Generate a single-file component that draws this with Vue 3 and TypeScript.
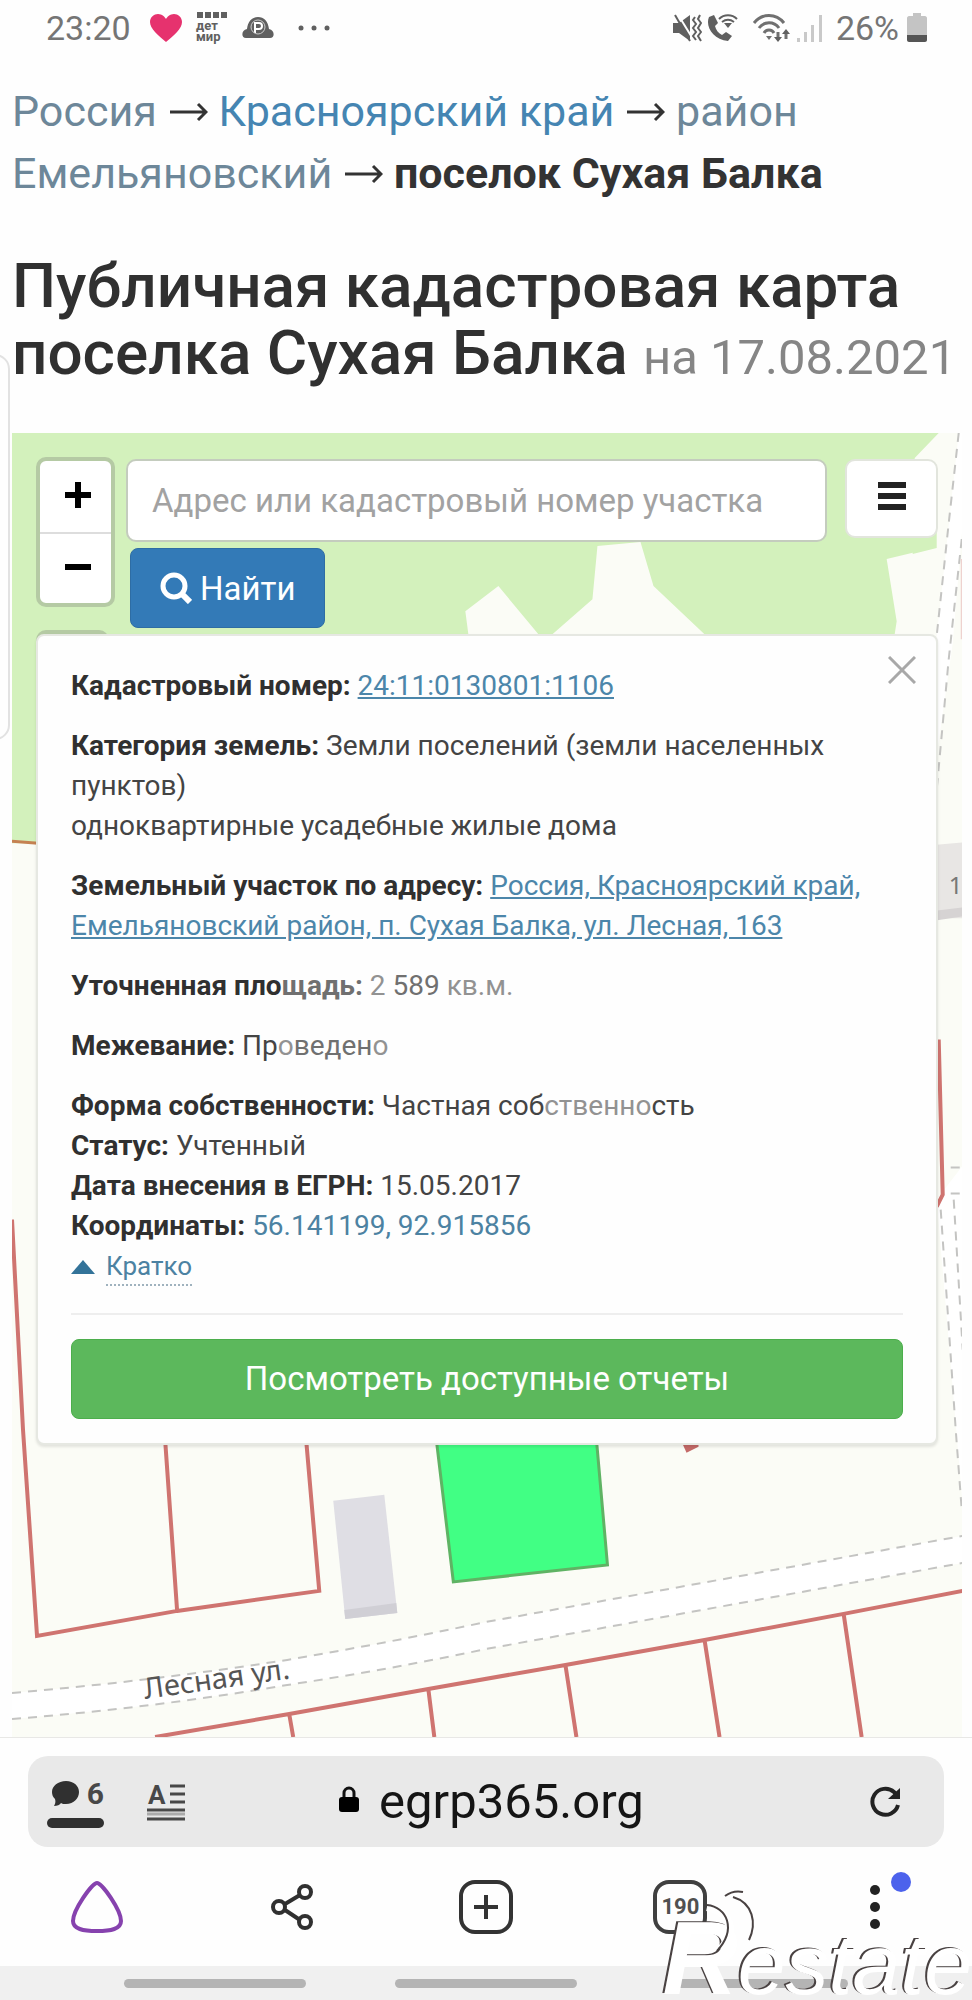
<script setup lang="ts">
import { ref } from 'vue'

interface Crumb {
  label: string
  tone: 'muted' | 'link'
}

const crumbs: Crumb[] = [
  { label: 'Россия', tone: 'muted' },
  { label: 'Красноярский край', tone: 'link' },
  { label: 'район Емельяновский', tone: 'muted' },
]

const query = ref('')
</script>

<template>
  <div class="page">
    <div class="statusbar">
      <div class="status-group">
        <span>23:20</span>
        <svg class="heart" viewBox="0 0 34 30" width="34" height="30">
          <path d="M17 29C9 22 1 16 1 9c0-5 4-8 8-8 4 0 7 3 8 5 1-2 4-5 8-5s8 3 8 8c0 7-8 13-16 20z" fill="#e6326e" />
        </svg>
        <svg class="mini-app" viewBox="0 0 34 34" width="34" height="34" fill="#606060">
          <path d="M2 1h6v6H2zM10 1h6v6h-6zM18 1h6v6h-6zM26 1h6v6h-6z" />
          <text x="1" y="19" class="mini-text">дет</text>
          <text x="1" y="30" class="mini-text">мир</text>
        </svg>
        <svg viewBox="0 0 34 24" width="34" height="24">
          <path d="M5 22c-5 0-5-8 1-9C7 5 11 1 17 1s10 4 11 12c6 1 6 9 1 9z" fill="#606060" />
          <path d="M14 17V7h4a3 3 0 0 1 0 6h-4" fill="none" stroke="#fff" stroke-width="2" />
          <circle cx="17" cy="11" r="7" fill="none" stroke="#ccc" stroke-width="1" />
        </svg>
        <svg class="more" viewBox="0 0 34 6" width="34" height="6" fill="#606060">
          <circle cx="4" cy="3" r="2.500" /><circle cx="17" cy="3" r="2.500" /><circle cx="30" cy="3" r="2.500" />
        </svg>
      </div>
      <div class="status-group right">
        <svg viewBox="0 0 30 30" width="30" height="30" fill="none" stroke="#606060">
          <path d="M1 10h6l11-8v26L7 20H1z" fill="#606060" stroke="none" />
          <path d="M5 0l16 26" stroke="#fff" stroke-width="2" />
          <path d="M3 2l15 26" stroke-width="2" />
          <path d="M23 4l-2 3 3 4-3 4 3 4-3 4 3 4M28 2l-2 4 3 4-3 5 3 4-3 4 3 5" stroke-width="2" />
        </svg>
        <svg viewBox="0 0 32 30" width="32" height="30" fill="none" stroke="#606060">
          <path d="M3 4c-4 9 4 23 19 24l4-5-6-4-4 3c-4-2-6-5-7-9l3-3-4-8z" fill="#606060" stroke="none" />
          <path d="M13 6c5-5 13-5 18 0M16 9c4-3 8-3 12 0" stroke-width="2" />
          <path d="M18 10h8l-4 5z" fill="#606060" stroke="none" />
        </svg>
        <svg class="wifi" viewBox="0 0 40 30" width="40" height="30" fill="none" stroke="#707070" stroke-width="3">
          <path d="M2 10c8-10 22-10 30 0M7 15c5-7 15-7 20 0M12 20c2-4 8-4 10 0" />
          <path d="M14 23h6l-3 4z" fill="#707070" stroke="none" />
          <path d="M26 19v7M34 26v-6" />
          <path d="M22 24h8l-4 5zM30 21h8l-4-5z" fill="#606060" stroke="none" />
        </svg>
        <svg viewBox="0 0 28 30" width="28" height="30" fill="#c9c9c9">
          <path d="M1 25h3v4H1zM8 19h3v10H8zM15 12h3v17h-3zM23 2h3v27h-3z" />
        </svg>
        <span class="percent">26%</span>
        <svg viewBox="0 0 20 30" width="20" height="30">
          <path d="M6 0h8v3h4c1 0 2 1 2 2v18H0V5c0-1 1-2 2-2h4z" fill="#c4c4c4" />
          <path d="M0 22h20v5c0 1-1 2-2 2H2c-1 0-2-1-2-2z" fill="#555" />
        </svg>
      </div>
    </div>

    <div class="drawer-edge"></div>

    <header class="head">
      <nav class="crumbs" aria-label="Регион">
        <template v-for="crumb in crumbs" :key="crumb.label">
          <a href="#" :class="crumb.tone">{{ crumb.label }}</a>
          <svg class="arrow" viewBox="0 0 38 20" width="38" height="20" fill="none" stroke="#333" stroke-width="3">
            <path d="M0 10h36M28 2l8 8-8 8" />
          </svg>
          {{ ' ' }}
        </template>
        <b>поселок Сухая Балка</b>
      </nav>
      <h1>Публичная кадастровая карта поселка Сухая Балка <small>на 17.08.2021</small></h1>
    </header>

    <main class="map">
      <svg class="canvas" viewBox="12 434 950 1303" preserveAspectRatio="xMinYMin slice" aria-hidden="true">
        <path d="M12 434h950v1303H12z" fill="#fbfcf6" />
        <path d="M12 434h926l-24 25v92l22-3-50 12 10 62-2 13H704l-51-48-13-44-43 4-5 53-40 35h-14l-40-48-33 25 3 23v209H12z" fill="#d3f1bc" />
        <path d="M912 462l24 34v53l-24 6z" fill="#d3f1bc" />
        <path d="M12 842l26 2" stroke="#c58252" stroke-width="3" />
        <path d="M958 434l-26 240v110l20-140 10-120v-90z" fill="#fff" />
        <path d="M958 434l-10 90-16 150M961 540l-13 120-12 130" class="dash" />
        <path d="M961 560v80" stroke="#eed2cf" stroke-width="2" />
        <path d="M930 846l32-3v76h-32z" fill="#e8e6e4" />
        <path d="M930 912l32-4v9l-32 5z" fill="#d6d3d3" />
        <text x="948" y="895" class="house">1</text>
        <path d="M936 1200l26-34v340z" fill="#fff" />
        <path d="M940 1210l15 220 6 80M950 1168h12M950 1194h12M953 1200l9 150" class="dash" />
        <g class="parcel">
          <path d="M938 1040l4 155-6 12" />
          <path d="M12 1220l11 210 14 206 140-25 142-20-13-150M165 1440l12 171" />
          <path d="M155 1737l134-23 139-25 137-24 139-25 139-26 119-23M289 1714l4 23M428 1689l6 48M565 1665l11 72M704 1640l15 97M843 1614l18 123" />
        </g>
        <path d="M682 1444l4 9 12-6v-3z" fill="#c46a68" />
        <path d="M333 1501l51-6 13 118-52 6z" fill="#dfdee4" />
        <path d="M344 1610l52-7 1 10-52 6z" fill="#d0cfd5" />
        <path d="M436 1440h160l11 125-154 17z" fill="#41ff84" stroke="#5fb364" stroke-width="3" />
        <path d="M12 1693q140-12 275-33 100-17 199-38l476-86v27l-476 86q-100 21-199 36-135 23-275 34z" fill="#fff" />
        <path d="M12 1693q140-12 275-33 100-17 199-38l476-86M12 1719q140-11 275-34 100-15 199-36l476-86" class="dash" />
        <text transform="translate(145 1699) rotate(-8)" class="street">Лесная ул.</text>
      </svg>

      <div class="controls">
        <div class="zoom-column">
          <div class="zoom">
            <button type="button" aria-label="Приблизить">
              <svg viewBox="0 0 26 26" width="26" height="26"><path d="M0 13h26M13 0v26" stroke="#000" stroke-width="6" /></svg>
            </button>
            <button type="button" aria-label="Отдалить">
              <svg viewBox="0 0 26 26" width="26" height="26"><path d="M0 13h26" stroke="#000" stroke-width="6" /></svg>
            </button>
          </div>
          <div class="under-control"></div>
        </div>
        <form class="search" @submit.prevent>
          <input v-model="query" type="text" aria-label="Адрес или кадастровый номер участка" placeholder="Адрес или кадастровый номер участка" />
          <button type="submit" class="find">
            <svg viewBox="0 0 32 32" width="32" height="32" fill="none" stroke="#fff">
              <circle cx="14" cy="14" r="11" stroke-width="5" /><path d="M21 21l9 9" stroke-width="6" />
            </svg>
            Найти
          </button>
        </form>
        <button type="button" class="layers" aria-label="Меню">
          <svg viewBox="0 0 28 30" width="28" height="30"><path d="M0 4h28M0 15h28M0 26h28" stroke="#222" stroke-width="6" /></svg>
        </button>
      </div>

      <section class="card">
        <button type="button" class="close" aria-label="Закрыть">
          <svg viewBox="0 0 28 28" width="28" height="28"><path d="M1 1l26 26M27 1L1 27" stroke="#a8a8a8" stroke-width="3" /></svg>
        </button>
        <p><b>Кадастровый номер:</b> <a href="#">24:11:0130801:1106</a></p>
        <p><b>Категория земель:</b> Земли поселений (земли населенных пунктов)<br />одноквартирные усадебные жилые дома</p>
        <p><b>Земельный участок по адресу:</b> <a href="#">Россия, Красноярский край, Емельяновский район, п. Сухая Балка, ул. Лесная, 163</a></p>
        <p><b>Уточненная пло<span class="soft">щадь:</span></b> <span class="pale">2 </span><span class="soft">589</span><span class="pale"> кв.м.</span></p>
        <p><b>Межевание:</b> Пр<span class="pale">о</span><span class="soft">веден</span><span class="pale">о</span></p>
        <p>
          <b>Форма собственности:</b> Частная соб<span class="pale">ственно</span>сть<br />
          <b>Статус:</b> Учтенный<br />
          <b>Дата внесения в ЕГРН:</b> 15.05.2017<br />
          <b>Координаты:</b> <span class="coords">56.141199, 92.915856</span>
        </p>
        <button type="button" class="brief">
          <svg viewBox="0 0 24 14" width="24" height="14"><path d="M0 14L12 0l12 14z" fill="#337399" /></svg>
          <span>Кратко</span>
        </button>
        <hr />
        <button type="button" class="reports">Посмотреть доступные отчеты</button>
      </section>
    </main>

    <footer class="browser">
      <div class="address">
        <button type="button" class="reviews" aria-label="Отзывы: 6">
          <span class="reviews-row">
            <svg viewBox="0 0 28 28" width="28" height="28"><path d="M14 1c8 0 13 5 13 11s-5 12-13 12c-2 0-4 0-5-1-1 2-4 3-7 3 1-2 2-4 1-7-2-2-3-4-3-7C0 6 6 1 14 1z" fill="#303030" /></svg>
            6
          </span>
        </button>
        <button type="button" class="reader" aria-label="Режим чтения">
          <svg viewBox="0 0 38 38" width="38" height="38" fill="none" stroke="#484848">
            <path d="M23 3h15M23 11h15M23 19h15M0 27h38M0 36h38" stroke-width="3" />
            <path d="M0 31h38" stroke="#aaa" stroke-width="3" />
            <text x="1" y="21" class="reader-a">A</text>
          </svg>
        </button>
        <div class="host">
          <svg viewBox="0 0 20 26" width="20" height="26"><path d="M5 12V7a5 5 0 0 1 10 0v5" fill="none" stroke="#111" stroke-width="3" /><rect y="11" width="20" height="15" rx="3" fill="#000" /></svg>
          <span>egrp365.org</span>
        </div>
        <button type="button" class="reload" aria-label="Обновить">
          <svg viewBox="0 0 32 32" width="32" height="32" fill="none" stroke="#222" stroke-width="4">
            <path d="M28 19A13 13 0 1 1 24 6l4 4" /><path d="M30 2v11H18z" fill="#222" stroke="none" />
          </svg>
        </button>
      </div>
      <nav class="tabs" aria-label="Панель браузера">
        <button type="button" aria-label="Алиса">
          <svg viewBox="0 0 54 54" width="54" height="54" fill="none" stroke="#8642ae" stroke-width="4">
            <path d="M27 3c5 0 24 27 24 38 0 8-10 10-24 10S3 49 3 41C3 30 22 3 27 3z" />
          </svg>
        </button>
        <button type="button" aria-label="Поделиться">
          <svg viewBox="0 0 44 48" width="44" height="48" fill="none" stroke="#303030" stroke-width="4">
            <path d="M15 21l15-9M15 27l15 10" /><circle cx="9" cy="24" r="6" /><circle cx="35" cy="9" r="6" /><circle cx="35" cy="39" r="6" />
          </svg>
        </button>
        <button type="button" aria-label="Новая вкладка">
          <svg viewBox="0 0 56 56" width="56" height="56" fill="none" stroke="#333" stroke-width="4">
            <rect x="3" y="3" width="50" height="50" rx="14" /><path d="M28 16v24M16 28h24" />
          </svg>
        </button>
        <button type="button" class="count" aria-label="Вкладки: 190"><span>190</span></button>
        <button type="button" class="menu" aria-label="Меню браузера">
          <svg viewBox="0 0 10 44" width="10" height="44" fill="#222"><circle cx="5" cy="5" r="5" /><circle cx="5" cy="22" r="5" /><circle cx="5" cy="39" r="5" /></svg>
          <i></i>
        </button>
      </nav>
      <div class="system"><i></i><i></i><i></i></div>
      <div class="watermark">
        <svg class="swirl" viewBox="0 0 56 66" width="56" height="66" fill="none">
          <path d="M2 18Q30 24 24 50l-8 10" stroke="#fff" stroke-width="8" />
          <path d="M2 16c20 2 30 24 10 46" stroke="#494242" stroke-width="2" />
          <path d="M20 7q8-6 18-4" stroke="#494242" stroke-width="2" />
          <path d="M28 8c20 6 24 26 16 43" stroke="#494242" stroke-width="2" />
        </svg>
        <span class="big">R</span><span>estate</span>
      </div>
    </footer>
  </div>
</template>

<style>
body {
  margin: 0;
  background: #fefefe;
}
</style>

<style scoped>
.page {
  position: relative;
  display: flex;
  flex-direction: column;
  min-height: 100vh;
  overflow: hidden;
  background: #fefefe;
  color: #333;
  font-family: Roboto, "Liberation Sans", sans-serif;
}
.page * {
  box-sizing: border-box;
}
button {
  padding: 0;
  border: 0;
  background: none;
  color: inherit;
  font: inherit;
}
svg {
  display: block;
  flex: none;
}
.statusbar {
  display: flex;
  justify-content: space-between;
  height: 56px;
  padding: 0 45px 0 46px;
  color: #757575;
  font-size: 34px;
  line-height: 58px;
}
.status-group {
  display: flex;
  align-items: center;
  gap: 12px;
}
.status-group .heart {
  margin-left: 6px;
}
.status-group .more {
  margin-left: 10px;
}
.mini-text {
  font: 700 13px Roboto, sans-serif;
}
.right {
  gap: 4px;
}
.right .wifi {
  margin-left: 10px;
}
.percent {
  margin: 0 4px 0 8px;
}
.drawer-edge {
  position: absolute;
  top: 354px;
  left: -20px;
  width: 30px;
  height: 386px;
  border: 2px solid #e2e2e2;
  border-radius: 16px;
}
.head {
  padding: 24px 12px 47px;
}
.crumbs {
  font-size: 43px;
  line-height: 62px;
}
.crumbs a {
  text-decoration: none;
}
.muted {
  color: #6d8799;
}
.link {
  color: #4585b2;
}
.arrow {
  display: inline-block;
  margin-left: 13px;
  vertical-align: 4px;
}
h1 {
  margin: 48px 0 0;
  color: #303030;
  font-size: 62px;
  font-weight: 500;
  line-height: 67px;
}
h1 small {
  color: #858585;
  font-size: 49px;
  font-weight: 400;
  line-height: 50px;
}
.map {
  position: relative;
  flex: 1;
  margin: 0 10px 0 12px;
  padding: 24px;
  overflow: hidden;
}
.canvas {
  position: absolute;
  inset: 0;
  width: 100%;
  height: 100%;
}
.dash {
  fill: none;
  stroke: #c4c4c2;
  stroke-width: 2;
  stroke-dasharray: 9 7;
}
.parcel {
  fill: none;
  stroke: #cf7470;
  stroke-width: 4;
}
.street {
  fill: #555;
  font: 29px "Noto Sans", sans-serif;
}
.house {
  fill: #777;
  font: 24px "Noto Sans", sans-serif;
}
.controls {
  position: relative;
  display: flex;
  height: 177px;
}
.zoom-column {
  flex: none;
  width: 79px;
  margin-right: 11px;
}
.zoom {
  border: 4px solid #b5caa4;
  border-radius: 10px;
  background: #fff;
}
.zoom button {
  display: flex;
  align-items: center;
  justify-content: center;
  width: 100%;
  height: 71px;
  padding: 0 0 4px 4px;
}
.zoom button + button {
  border-top: 2px solid #ddd;
}
.under-control {
  height: 30px;
  margin: 23px 6px 0 0;
  border: 4px solid #b5caa4;
  border-radius: 10px;
}
.search {
  flex: 1;
  min-width: 0;
  padding-top: 2px;
}
.search input {
  display: block;
  width: 100%;
  height: 83px;
  padding: 0 24px;
  border: 2px solid #c4ccbe;
  border-radius: 10px;
  background: #fff;
  color: #555;
  font: 33px Roboto, sans-serif;
}
.search input::placeholder {
  color: #a2a2a2;
  opacity: 1;
}
.find {
  display: flex;
  align-items: center;
  justify-content: center;
  gap: 8px;
  height: 80px;
  margin: 6px 0 0 4px;
  padding: 0 29px;
  border: 1px solid #2e6da4;
  border-radius: 8px;
  background: #337ab7;
  color: #fff;
  font-size: 33px;
}
.layers {
  display: flex;
  justify-content: center;
  flex: none;
  width: 93px;
  height: 79px;
  margin: 2px 0 0 18px;
  padding-top: 20px;
  border: 2px solid #e2e5dd;
  border-radius: 10px;
  background: #fff;
}
.card {
  position: relative;
  padding: 30px 33px 24px;
  border: 2px solid #e6e8e2;
  border-radius: 8px;
  background: #fefefe;
  box-shadow: 0 2px 3px rgba(0, 0, 0, 0.1);
  color: #444;
  font-size: 28px;
  line-height: 40px;
}
.card p {
  margin: 0 0 20px;
}
.card p:last-of-type {
  margin-bottom: 2px;
}
.card b {
  color: #303030;
  font-weight: 700;
}
.card a {
  color: #4c86aa;
}
.coords {
  color: #4c82a2;
}
.card .soft {
  color: #707070;
}
.card .pale {
  color: #929292;
}
.close {
  position: absolute;
  top: 20px;
  right: 20px;
}
.brief {
  display: flex;
  align-items: center;
  gap: 11px;
  color: #4c82a2;
  font-size: 26px;
}
.brief span {
  border-bottom: 2px dotted #9fb2be;
  line-height: 36px;
}
hr {
  height: 2px;
  margin: 27px 0 24px;
  border: 0;
  background: #eee;
}
.reports {
  display: block;
  width: 100%;
  height: 80px;
  border: 1px solid #4cae4c;
  border-radius: 8px;
  background: #5cb85c;
  color: #fff;
  font-size: 33px;
}
.browser {
  position: relative;
  border-top: 1px solid #e8e8e6;
}
.address {
  display: flex;
  align-items: center;
  height: 91px;
  margin: 18px 28px 0;
  padding: 0 42px 0 19px;
  border-radius: 20px;
  background: #e9e9e9;
}
.reviews {
  width: 57px;
  color: #484848;
  font-size: 30px;
  font-weight: 700;
  line-height: 36px;
}
.reviews-row {
  display: flex;
  align-items: center;
  justify-content: space-between;
  padding: 0 0 0 5px;
}
.reviews::after {
  content: "";
  display: block;
  height: 10px;
  margin-top: 6px;
  border-radius: 5px;
  background: #303030;
}
.reader {
  margin-left: 43px;
}
.reader-a {
  fill: #484848;
  stroke: none;
  font: 700 26px Roboto, sans-serif;
}
.host {
  display: flex;
  align-items: center;
  justify-content: center;
  flex: 1;
  gap: 20px;
  padding-right: 72px;
  color: #151515;
  font-size: 49px;
  line-height: 56px;
}
.host svg {
  margin-bottom: 6px;
}
.tabs {
  display: grid;
  grid-template-columns: repeat(5, 1fr);
  height: 119px;
}
.tabs button {
  position: relative;
  display: flex;
  align-items: center;
  justify-content: center;
}
.count span {
  width: 54px;
  height: 54px;
  border: 4px solid #404040;
  border-radius: 16px;
  color: #505050;
  font-size: 22px;
  font-weight: 700;
  line-height: 46px;
  text-align: center;
}
.menu i {
  position: absolute;
  top: 25px;
  left: calc(50% + 16px);
  width: 20px;
  height: 20px;
  border-radius: 50%;
  background: #4c62ec;
}
.system {
  display: flex;
  align-items: center;
  justify-content: center;
  gap: 89px;
  height: 34px;
  background: #f0f0f0;
}
.system i {
  width: 182px;
  height: 9px;
  border-radius: 5px;
  background: #b4b4b4;
}
.watermark {
  position: absolute;
  right: 0;
  bottom: 0;
  display: flex;
  align-items: baseline;
  padding-bottom: 13px;
  color: #fff;
  font: italic 86px/46px "Liberation Sans", sans-serif;
  text-shadow: -2px -1px 0 #494242;
}
.watermark .big {
  font-size: 104px;
  font-weight: 700;
}
.swirl {
  position: absolute;
  bottom: 45px;
  left: 42px;
}
</style>
